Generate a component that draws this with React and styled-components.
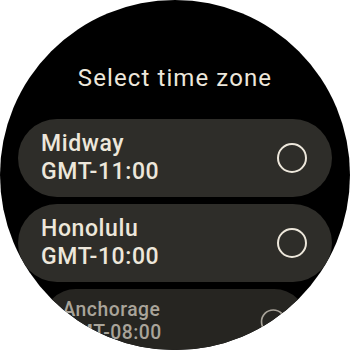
import React from 'react';
import styled, { createGlobalStyle } from 'styled-components';

const GlobalStyle = createGlobalStyle`
  html, body {
    margin: 0;
    padding: 0;
    background: #ffffff;
  }
`;

// round watch screen, everything outside the circle is clipped
const Screen = styled.div`
  width: 350px;
  height: 350px;
  border-radius: 50%;
  overflow: hidden;
  background: #000000;
  display: flex;
  flex-direction: column;
  align-items: center;
  font-family: Roboto, "Noto Sans", sans-serif;
`;

const Title = styled.h1`
  margin: 62px 0 0 0;
  font-size: 24px;
  line-height: 32px;
  font-weight: 400;
  color: #ede7db;
  letter-spacing: 1.1px;
`;

const List = styled.div`
  display: flex;
  flex-direction: column;
  gap: 7px;
  margin-top: 25px;
  width: 314px;
`;

const Chip = styled.div`
  height: 78px;
  border-radius: 39px;
  background: ${props => (props.far ? '#262521' : '#2e2d29')};
  display: flex;
  align-items: center;
  justify-content: space-between;
  padding: 0 25px 0 23px;
  box-sizing: border-box;
  flex-shrink: 0;
  transform: ${props => (props.far ? 'scale(0.84)' : 'none')};
  transform-origin: top center;
`;

const Labels = styled.div`
  display: flex;
  flex-direction: column;
  color: ${props => (props.far ? '#a9a49a' : '#ede7db')};
`;

const Label = styled.span`
  font-size: 23px;
  line-height: 28px;
  font-weight: 500;
  letter-spacing: 0.6px;
`;

const Radio = styled.span`
  width: 30px;
  height: 30px;
  border-radius: 50%;
  border: 2.6px solid ${props => (props.far ? '#a9a49a' : '#ede7db')};
  box-sizing: border-box;
`;

const zones = [
  { city: 'Midway', offset: 'GMT-11:00' },
  { city: 'Honolulu', offset: 'GMT-10:00' },
  { city: 'Anchorage', offset: 'GMT-08:00', far: true },
];

export default function App() {
  return (
    <>
      <GlobalStyle />
      <Screen>
        <Title>Select time zone</Title>
        <List>
          {zones.map(z => (
            <Chip key={z.city} far={z.far}>
              <Labels far={z.far}>
                <Label>{z.city}</Label>
                <Label>{z.offset}</Label>
              </Labels>
              <Radio far={z.far} />
            </Chip>
          ))}
        </List>
      </Screen>
    </>
  );
}
